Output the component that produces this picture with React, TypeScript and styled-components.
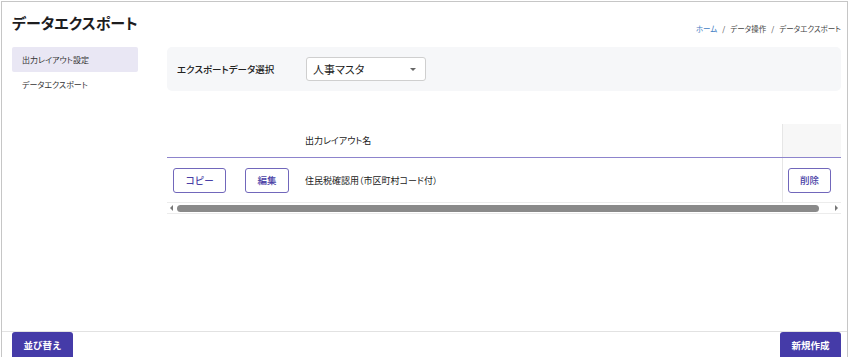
import React from "react"
import styled, { createGlobalStyle } from "styled-components"

const GlobalStyle = createGlobalStyle`
  html, body {
    margin: 0;
    padding: 0;
    background: #ffffff;
  }
  body {
    font-family: "Noto Sans CJK JP", "Noto Sans", sans-serif;
    color: #222;
    font-feature-settings: "palt";
  }
  * { box-sizing: border-box; }
`

const Frame = styled.div`
  margin: 1px 0 0 1px;
  width: 847px;
  height: 356px;
  border: 1px solid #c6c6c6;
  border-bottom: none;
  display: flex;
  flex-direction: column;
  overflow: hidden;
`

const Header = styled.header`
  display: flex;
  align-items: flex-start;
  justify-content: space-between;
  padding: 10px 6px 0 10px;
  height: 37px;
`

const Title = styled.h1`
  margin: 0;
  font-size: 15px;
  font-weight: 700;
  color: #1d1d1f;
  line-height: 22px;
`

const Crumbs = styled.nav`
  display: flex;
  gap: 5px;
  font-size: 7.5px;
  color: #444;
  line-height: 12px;
  margin-top: 11px;
`

const Crumb = styled.span<{ $link?: boolean }>`
  color: ${p => (p.$link ? "#3f7cc4" : "#444")};
`

const Body = styled.div`
  flex: 1;
  display: flex;
  gap: 29px;
  padding: 8px 6px 0 10px;
`

const Side = styled.aside`
  width: 126px;
  display: flex;
  flex-direction: column;
`

const SideItem = styled.div<{ $active?: boolean }>`
  height: 25px;
  display: flex;
  align-items: center;
  padding-left: 10px;
  font-size: 8px;
  color: #333;
  background: ${p => (p.$active ? "#e9e7f4" : "transparent")};
  border-radius: 2px;
`

const Main = styled.main`
  flex: 1;
  display: flex;
  flex-direction: column;
`

const FilterPanel = styled.section`
  height: 44px;
  background: #f6f7f9;
  border-radius: 5px;
  display: flex;
  align-items: center;
  padding-left: 10px;
  gap: 29px;
`

const FilterLabel = styled.label`
  font-size: 9.5px;
  font-weight: 500;
  color: #222;
  width: 100px;
`

const Select = styled.div`
  width: 120px;
  height: 24px;
  background: #fff;
  border: 1px solid #cfcfcf;
  border-radius: 3px;
  display: flex;
  align-items: center;
  justify-content: space-between;
  padding: 0 9px 0 6px;
  font-size: 11px;
  color: #222;
`

const Caret = styled.span`
  width: 0;
  height: 0;
  border-left: 3px solid transparent;
  border-right: 3px solid transparent;
  border-top: 3px solid #666;
`

const TableWrap = styled.div`
  margin-top: 33px;
  display: flex;
  flex-direction: column;
`

const Row = styled.div<{ $head?: boolean }>`
  display: grid;
  grid-template-columns: 72px 60px 1fr 59px;
  height: ${p => (p.$head ? "34px" : "44px")};
  align-items: center;
  border-bottom: ${p => (p.$head ? "1px solid #8d84cc" : "none")};
`

const Cell = styled.div`
  font-size: 9px;
  color: #222;
  padding-left: 6px;
  height: 100%;
  display: flex;
  align-items: center;
`

const StickyCell = styled.div<{ $head?: boolean }>`
  height: 100%;
  border-left: 1px solid #e6e6e6;
  background: ${p => (p.$head ? "#f7f7f7" : "#fff")};
  display: flex;
  align-items: center;
  padding-left: 5px;
`

const OutlineButton = styled.button<{ $w: number }>`
  width: ${p => p.$w}px;
  height: 25px;
  border: 1px solid #7167bb;
  border-radius: 3px;
  background: #fff;
  color: #4a3fa6;
  font-family: inherit;
  font-size: 9.5px;
  font-weight: 500;
  padding: 0;
  cursor: pointer;
`

const ScrollBar = styled.div`
  height: 12px;
  border-top: 1px solid #ececec;
  border-bottom: 1px solid #ececec;
  display: flex;
  align-items: center;
  padding: 0 3px;
  gap: 4px;
`

const Arrow = styled.span<{ $dir: "left" | "right" }>`
  width: 0;
  height: 0;
  border-top: 3px solid transparent;
  border-bottom: 3px solid transparent;
  ${p =>
    p.$dir === "left"
      ? "border-right: 3px solid #777;"
      : "border-left: 3px solid #777;"}
`

const Thumb = styled.div`
  flex: 1;
  height: 7px;
  border-radius: 4px;
  background: #8a8a8a;
  margin-right: 12px;
`

const Footer = styled.footer`
  height: 26px;
  border-top: 1px solid #e2e2e2;
  display: flex;
  justify-content: space-between;
  align-items: flex-end;
  padding: 0 6px 0 10px;
`

const SolidButton = styled.button`
  width: 61px;
  height: 25px;
  border: none;
  border-radius: 3px 3px 0 0;
  background: #453ba8;
  color: #fff;
  font-family: inherit;
  font-size: 9.5px;
  font-weight: 700;
  padding: 0;
  cursor: pointer;
`

export default function App() {
  return (
    <>
      <GlobalStyle />
      <Frame>
        <Header>
          <Title>データエクスポート</Title>
          <Crumbs>
            <Crumb $link>ホーム</Crumb>
            <Crumb>/</Crumb>
            <Crumb>データ操作</Crumb>
            <Crumb>/</Crumb>
            <Crumb>データエクスポート</Crumb>
          </Crumbs>
        </Header>
        <Body>
          <Side>
            <SideItem $active>出力レイアウト設定</SideItem>
            <SideItem>データエクスポート</SideItem>
          </Side>
          <Main>
            <FilterPanel>
              <FilterLabel>エクスポートデータ選択</FilterLabel>
              <Select>
                <span>人事マスタ</span>
                <Caret />
              </Select>
            </FilterPanel>
            <TableWrap>
              <Row $head>
                <Cell />
                <Cell />
                <Cell>出力レイアウト名</Cell>
                <StickyCell $head />
              </Row>
              <Row>
                <Cell>
                  <OutlineButton $w={53}>コピー</OutlineButton>
                </Cell>
                <Cell>
                  <OutlineButton $w={44}>編集</OutlineButton>
                </Cell>
                <Cell>住民税確認用（市区町村コード付）</Cell>
                <StickyCell>
                  <OutlineButton $w={43}>削除</OutlineButton>
                </StickyCell>
              </Row>
              <ScrollBar>
                <Arrow $dir="left" />
                <Thumb />
                <Arrow $dir="right" />
              </ScrollBar>
            </TableWrap>
          </Main>
        </Body>
        <Footer>
          <SolidButton>並び替え</SolidButton>
          <SolidButton>新規作成</SolidButton>
        </Footer>
      </Frame>
    </>
  )
}
